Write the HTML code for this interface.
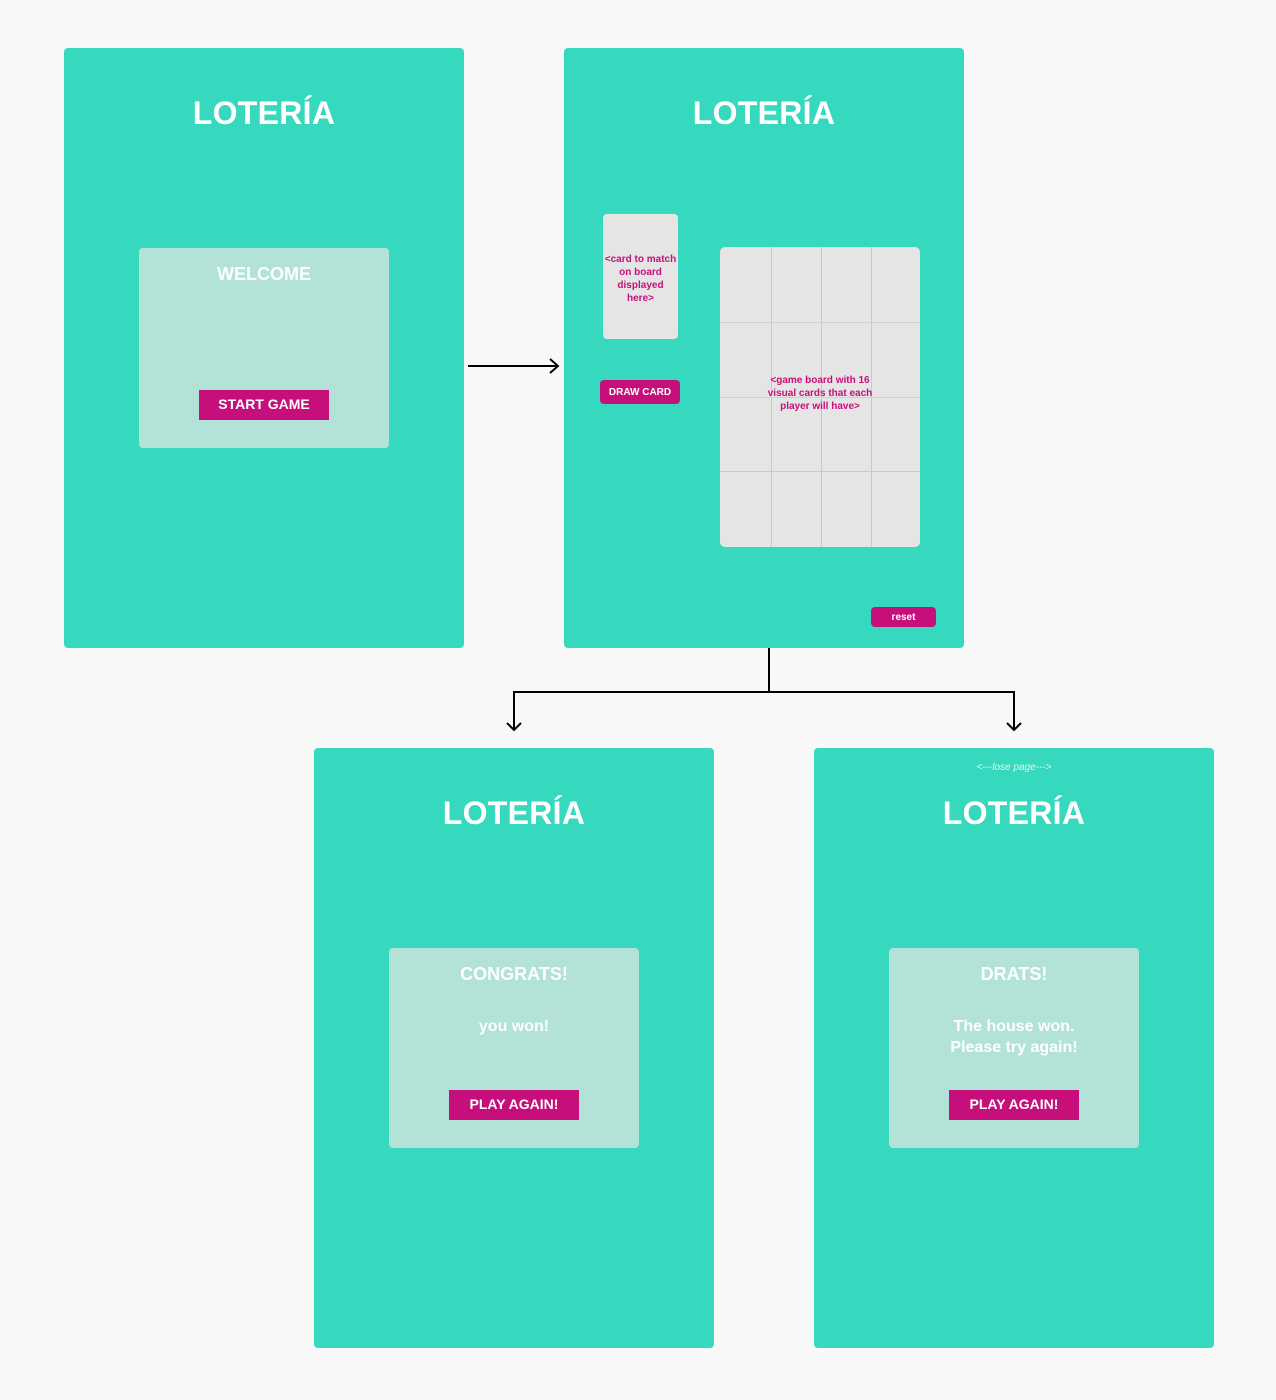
<!DOCTYPE html>
<html><head><meta charset="utf-8"><style>
*{margin:0;padding:0;box-sizing:border-box}
body{width:1276px;height:1400px;background:#f8f8f8;position:relative;font-family:"Liberation Sans",sans-serif;overflow:hidden}
.f{position:absolute;width:400px;height:600px;background:#36d9bd;border-radius:4px}
.t{position:absolute;left:0;width:400px;top:47px;text-align:center;color:#fff;font-weight:bold;font-size:32px;letter-spacing:0.3px}
.box{position:absolute;left:75px;top:200px;width:250px;height:200px;background:#b2e2d8;border-radius:4px;color:#fff;font-weight:bold;text-align:center}
.box h2{font-size:18px;margin-top:16px}
.box p{font-size:16px;position:absolute;left:0;width:250px;top:68px;line-height:21px}
.btn{position:absolute;left:60px;top:142px;width:130px;height:30px;background:#c60f7b;color:#fff;font-size:14px;font-weight:bold;line-height:29px;text-align:center}
</style></head><body>
<div class="f" style="left:64px;top:48px"><div class="t">LOTERÍA</div>
<div class="box"><h2>WELCOME</h2><div class="btn">START GAME</div></div></div>

<div class="f" style="left:564px;top:48px"><div class="t">LOTERÍA</div>
<div style="position:absolute;left:39px;top:166px;width:75px;height:125px;background:#e5e5e5;border-radius:4px;color:#c60f7b;font-size:10px;font-weight:bold;text-align:center;line-height:13px;padding-top:39px">&lt;card to match on board displayed here&gt;</div>
<div style="position:absolute;left:36px;top:332px;width:80px;height:24px;background:#c60f7b;border-radius:4px;color:#fff;font-size:10px;font-weight:bold;text-align:center;line-height:25px">DRAW CARD</div>
<div style="position:absolute;left:156px;top:199px;width:200px;height:300px;background:#e5e5e5;border-radius:5px;overflow:hidden">
<div style="position:absolute;left:51px;top:0;width:1px;height:300px;background:#c8c8c8"></div>
<div style="position:absolute;left:101px;top:0;width:1px;height:300px;background:#c8c8c8"></div>
<div style="position:absolute;left:151px;top:0;width:1px;height:300px;background:#c8c8c8"></div>
<div style="position:absolute;top:75px;left:0;height:1px;width:200px;background:#d0d0d0"></div>
<div style="position:absolute;top:150px;left:0;height:1px;width:200px;background:#d0d0d0"></div>
<div style="position:absolute;top:224px;left:0;height:1px;width:200px;background:#c8c8c8"></div>
<div style="position:absolute;left:40px;top:127px;width:120px;color:#c60f7b;font-size:10px;font-weight:bold;text-align:center;line-height:13px">&lt;game board with 16 visual cards that each player will have&gt;</div>
</div>
<div style="position:absolute;left:307px;top:559px;width:65px;height:20px;background:#c60f7b;border-radius:4px;color:#fff;font-size:10px;font-weight:bold;text-align:center;line-height:21px">reset</div>
</div>

<div class="f" style="left:314px;top:748px"><div class="t">LOTERÍA</div>
<div class="box"><h2>CONGRATS!</h2><p>you won!</p><div class="btn">PLAY AGAIN!</div></div></div>

<div class="f" style="left:814px;top:748px">
<div style="position:absolute;left:0;width:400px;top:14px;text-align:center;color:#e6f5f0;font-size:10px;font-style:italic">&lt;---lose page---&gt;</div>
<div class="t">LOTERÍA</div>
<div class="box"><h2>DRATS!</h2><p>The house won.<br>Please try again!</p><div class="btn">PLAY AGAIN!</div></div></div>

<svg style="position:absolute;left:0;top:0" width="1276" height="1400">
<g stroke="#000" stroke-width="2" fill="none">
<path d="M468 366H558M550 359L558 366L550 373"/>
<path d="M769 648V692M514 692H1015M514 691V730M1014 691V730M507 723L514 730L521 723M1007 723L1014 730L1021 723"/>
</g></svg>
</body></html>
